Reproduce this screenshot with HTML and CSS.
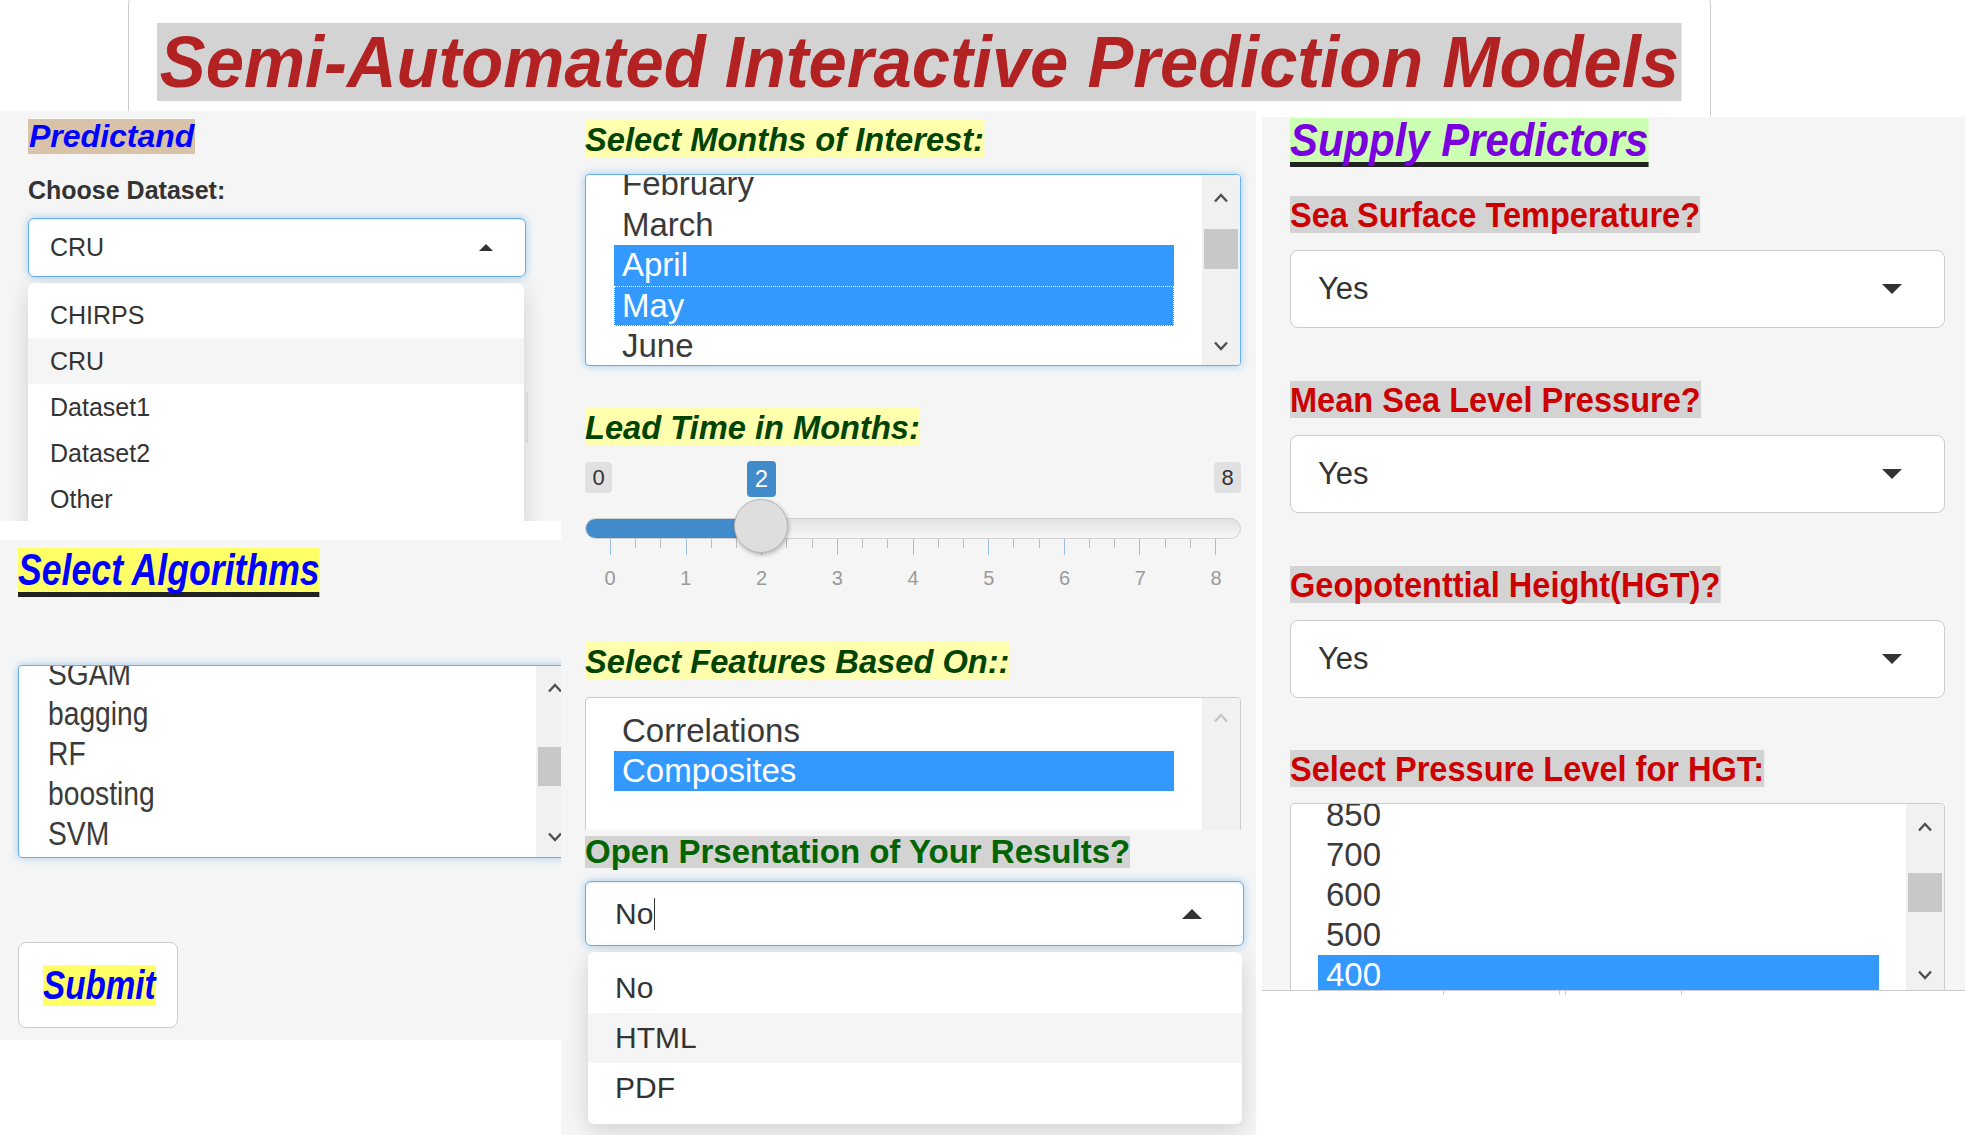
FILE: index.html
```html
<!DOCTYPE html>
<html lang="en">
<head>
<meta charset="utf-8">
<title>Semi-Automated Interactive Prediction Models</title>
<link rel="stylesheet" href="styles.css">
</head>
<body>
<header class="title-panel">
  <h1 class="title"><span class="title-text">Semi-Automated Interactive Prediction Models</span></h1>
</header>
<main class="cols">
  <div class="col-left">
    <section class="well well-predictand">
      <div class="hd"><span class="tag tag-predictand">Predictand</span></div>
      <label class="ctl-label">Choose Dataset:</label>
      <div class="sel sel-focus sel-dataset"><span>CRU</span><i class="caret caret-up caret-sm"></i></div>
      <div class="menu-wrap">
        <ul class="menu menu-dataset">
          <li>CHIRPS</li>
          <li class="hover">CRU</li>
          <li>Dataset1</li>
          <li>Dataset2</li>
          <li>Other</li>
        </ul>
        <span class="under-edge"></span>
      </div>
    </section>
    <section class="well well-algo">
      <div class="hd"><span class="tag tag-algo">Select Algorithms</span></div>
      <div class="lb focus lb-algo">
        <ul class="opts">
          <li><span>SGAM</span></li>
          <li><span>bagging</span></li>
          <li><span>RF</span></li>
          <li><span>boosting</span></li>
          <li><span>SVM</span></li>
        </ul>
        <div class="sbar">
          <div class="arr arr-top"><svg width="16" height="10" viewBox="0 0 16 10"><polyline points="2,8.5 8,2 14,8.5" fill="none" stroke="#505050" stroke-width="2.4"/></svg></div>
          <div class="thumb"></div>
          <div class="grow"></div>
          <div class="arr arr-bot"><svg width="16" height="10" viewBox="0 0 16 10"><polyline points="2,1.5 8,8 14,1.5" fill="none" stroke="#505050" stroke-width="2.4"/></svg></div>
        </div>
      </div>
      <div class="btn"><span class="tag tag-submit">Submit</span></div>
    </section>
  </div>

  <section class="col-mid">
    <div class="hd"><span class="tag tag-mid">Select Months of Interest:</span></div>
    <div class="lb focus lb-months">
      <ul class="opts">
        <li>February</li>
        <li>March</li>
        <li class="on">April</li>
        <li class="on dotted">May</li>
        <li>June</li>
      </ul>
      <div class="sbar">
        <div class="arr arr-top"><svg width="16" height="10" viewBox="0 0 16 10"><polyline points="2,8.5 8,2 14,8.5" fill="none" stroke="#505050" stroke-width="2.4"/></svg></div>
        <div class="thumb"></div>
        <div class="grow"></div>
        <div class="arr arr-bot"><svg width="16" height="10" viewBox="0 0 16 10"><polyline points="2,1.5 8,8 14,1.5" fill="none" stroke="#505050" stroke-width="2.4"/></svg></div>
      </div>
    </div>

    <div class="hd hd-lead"><span class="tag tag-mid">Lead Time in Months:</span></div>
    <div class="slider">
      <div class="badges"><span class="badge">0</span><span class="badge">8</span></div>
      <div class="track"><div class="bar" style="width: 176px"></div></div>
      <span class="badge badge-value">2</span>
      <span class="handle"></span>
      <div class="grid">
        <div class="seg"><i></i><i></i><i></i></div>
        <div class="seg"><i></i><i></i><i></i></div>
        <div class="seg"><i></i><i></i><i></i></div>
        <div class="seg"><i></i><i></i><i></i></div>
        <div class="seg"><i></i><i></i><i></i></div>
        <div class="seg"><i></i><i></i><i></i></div>
        <div class="seg"><i></i><i></i><i></i></div>
        <div class="seg"><i></i><i></i><i></i></div>
        <b class="end"></b>
      </div>
      <div class="grid-labels"><span>0</span><span>1</span><span>2</span><span>3</span><span>4</span><span>5</span><span>6</span><span>7</span><span>8</span></div>
    </div>

    <div class="hd hd-feat"><span class="tag tag-mid">Select Features Based On::</span></div>
    <div class="cut">
      <div class="lb lb-feat">
        <ul class="opts">
          <li>Correlations</li>
          <li class="on">Composites</li>
        </ul>
        <div class="sbar">
          <div class="arr arr-feat"><svg width="16" height="10" viewBox="0 0 16 10"><polyline points="2,8.5 8,2 14,8.5" fill="none" stroke="#c4c4c4" stroke-width="2.4"/></svg></div>
        </div>
      </div>
    </div>

    <div class="hd hd-open"><span class="tag tag-open">Open Prsentation of Your Results?</span></div>
    <div class="sel sel-focus sel-open"><span class="typed">No<b class="cursor"></b></span><i class="caret caret-up"></i></div>
    <ul class="menu menu-open">
      <li>No</li>
      <li class="hover">HTML</li>
      <li>PDF</li>
    </ul>
  </section>

  <div class="col-right">
    <section class="well well-pred">
      <div class="hd"><span class="tag tag-supply">Supply Predictors</span></div>

      <div class="hd hd-red hd-first"><span class="tag tag-red">Sea Surface Temperature?</span></div>
      <div class="sel sel-yes"><span>Yes</span><i class="caret caret-down"></i></div>

      <div class="hd hd-red"><span class="tag tag-red">Mean Sea Level Pressure?</span></div>
      <div class="sel sel-yes"><span>Yes</span><i class="caret caret-down"></i></div>

      <div class="hd hd-red"><span class="tag tag-red">Geopotenttial Height(HGT)?</span></div>
      <div class="sel sel-yes"><span>Yes</span><i class="caret caret-down"></i></div>

      <div class="hd hd-red hd-last"><span class="tag tag-red">Select Pressure Level for HGT:</span></div>
      <div class="lb lb-press">
        <ul class="opts">
          <li>850</li>
          <li>700</li>
          <li>600</li>
          <li>500</li>
          <li class="on">400</li>
        </ul>
        <div class="sbar">
          <div class="arr arr-top"><svg width="16" height="10" viewBox="0 0 16 10"><polyline points="2,8.5 8,2 14,8.5" fill="none" stroke="#505050" stroke-width="2.4"/></svg></div>
          <div class="thumb"></div>
          <div class="grow"></div>
          <div class="arr arr-bot"><svg width="16" height="10" viewBox="0 0 16 10"><polyline points="2,1.5 8,8 14,1.5" fill="none" stroke="#505050" stroke-width="2.4"/></svg></div>
        </div>
      </div>
    </section>
    <div class="tabline"><span class="tab"></span><span class="tab"></span></div>
  </div>
</main>
</body>
</html>
```

FILE: styles.css
```css
* { box-sizing: border-box; }
html, body { margin: 0; padding: 0; }
body {
  width: 1965px;
  height: 1135px;
  overflow: hidden;
  background: #fff;
  font-family: "Liberation Sans", Arial, sans-serif;
  color: #333;
}

/* ---------- title ---------- */
.title-panel {
  margin: -6px 0 0 128px;
  width: 1583px;
  height: 123px;
  border: 1px solid #ccc;
  border-bottom-color: transparent;
  border-radius: 10px 10px 0 0;
  background: #fff;
  padding: 28px 0 0 28px;
}
.title {
  margin: 0;
  display: flex;
  font-size: 72px;
  line-height: 78px;
  font-weight: bold;
  font-style: italic;
}
.title-text {
  flex: none;
  background: #d3d3d3;
  color: #b22222;
  padding: 0 3px;
  white-space: nowrap;
  transform: scaleX(.954);
  transform-origin: 0 0;
}

/* ---------- columns ---------- */
.cols { display: flex; align-items: flex-start; margin-top: -6px; }
.col-left { width: 561px; flex: none; }
.col-mid {
  width: 695px;
  flex: none;
  height: 1024px;
  background: #f5f5f5;
  padding: 9px 0 0 24px;
}
.col-right { width: 703px; flex: none; margin: 6px 0 0 6px; }

.well { background: #f5f5f5; overflow: hidden; }
.well-predictand { height: 410px; padding: 8px 0 0 28px; }
.well-algo { height: 500px; margin-top: 19px; padding: 8px 0 0 18px; }
.well-pred { height: 873px; padding: 1px 0 0 28px; }

/* ---------- heading tags ---------- */
.hd { display: flex; }
.tag {
  flex: none;
  font-weight: bold;
  font-style: italic;
  white-space: nowrap;
  transform-origin: 0 0;
}
.tag-predictand {
  font-size: 32px;
  line-height: 35px;
  color: #0000ff;
  background: #d8c3a9;
  padding: 0 1px;
}
.tag-algo {
  font-size: 44px;
  line-height: 44px;
  color: #0000ff;
  background: #ffff66;
  border-bottom: 5px solid #222;
  transform: scaleX(.81);
}
.tag-submit {
  font-size: 40px;
  line-height: 41px;
  color: #0000ff;
  background: #ffff66;
  transform: scaleX(.83);
}
.tag-mid {
  font-size: 34px;
  line-height: 38px;
  color: #004400;
  background: #ffffad;
  transform: scaleX(.96);
}
.tag-open {
  font-size: 33px;
  line-height: 32px;
  font-style: normal;
  color: #006400;
  background: #d3d3d3;
}
.tag-supply {
  font-size: 46px;
  line-height: 44px;
  color: #7a00e0;
  background: #ccffb3;
  border-bottom: 5px solid #222;
  transform: scaleX(.91);
}
.tag-red {
  font-size: 35px;
  line-height: 37px;
  font-style: normal;
  color: #cc0000;
  background: #d3d3d3;
  transform: scaleX(.93);
}

.ctl-label {
  display: block;
  margin-top: 21px;
  font-size: 25px;
  line-height: 30px;
  font-weight: bold;
  color: #333;
}

/* ---------- selects ---------- */
.sel {
  display: flex;
  align-items: center;
  justify-content: space-between;
  background: #fff;
  border: 1px solid #ccc;
  border-radius: 6px;
  color: #333;
}
.sel-focus {
  border-color: #66afe9;
  box-shadow: inset 0 1px 1px rgba(0,0,0,.075), 0 0 8px rgba(102,175,233,.6);
}
.sel-dataset {
  margin-top: 13px;
  width: 498px;
  height: 59px;
  font-size: 25px;
  padding-left: 21px;
}
.sel-dataset .caret { margin-right: 32px; }
.sel-open {
  margin-top: 13px;
  width: 659px;
  height: 65px;
  font-size: 30px;
  padding-left: 29px;
}
.sel-open .caret { margin-right: 41px; }
.sel-yes {
  margin-top: 17px;
  width: 655px;
  height: 78px;
  font-size: 31px;
  padding-left: 27px;
  border-radius: 8px;
}
.sel-yes .caret { margin-right: 42px; }

.caret { display: block; width: 0; height: 0; }
.caret-up {
  border-left: 10px solid transparent;
  border-right: 10px solid transparent;
  border-bottom: 10px solid #333;
}
.caret-up.caret-sm {
  border-left-width: 7px;
  border-right-width: 7px;
  border-bottom-width: 7px;
}
.caret-down {
  border-left: 10px solid transparent;
  border-right: 10px solid transparent;
  border-top: 10px solid #333;
}

.typed { display: flex; align-items: center; }
.cursor {
  display: block;
  width: 1px;
  height: 32px;
  margin-left: 1px;
  background: #333;
}

/* ---------- dropdown menus ---------- */
.menu-wrap { display: flex; align-items: flex-start; }
.under-edge {
  flex: none;
  width: 3px;
  height: 51px;
  margin: 115px 0 0 1px;
  background: #d9d9d9;
}
.menu {
  list-style: none;
  margin: 6px 0 0;
  padding: 9px 0;
  background: #fff;
  border-radius: 6px;
  box-shadow: 0 6px 22px rgba(0,0,0,.15);
  color: #333;
}
.menu li.hover { background: #f5f5f5; }
.menu-dataset { width: 496px; flex: none; font-size: 25px; }
.menu-dataset li { height: 46px; line-height: 46px; padding-left: 22px; }
.menu-open { width: 654px; margin-left: 3px; padding: 11px 0; font-size: 30px; }
.menu-open li { height: 50px; line-height: 50px; padding-left: 27px; }

/* ---------- list boxes ---------- */
.lb {
  display: flex;
  background: #fff;
  border: 1px solid #ccc;
  border-radius: 4px;
  overflow: hidden;
  color: #3a3a3a;
}
.lb.focus {
  border-color: #66afe9;
  box-shadow: 0 0 8px rgba(102,175,233,.6);
}
.opts {
  flex: 1;
  list-style: none;
  margin: 0;
  padding: 0 28px;
  font-size: 33px;
  line-height: 40px;
}
.opts li { height: 40px; padding-left: 8px; white-space: nowrap; }
.opts li.on { background: #3399ff; color: #fff; }
.opts li.dotted { outline: 1px dotted #fff; outline-offset: -1px; }

.sbar {
  width: 38px;
  flex: none;
  background: #f1f1f1;
  display: flex;
  flex-direction: column;
}
.arr { display: flex; align-items: center; justify-content: center; flex: none; }
.thumb { flex: none; margin: 0 2px; background: #c8c8c8; }
.grow { flex: 1; }

.lb-months { margin-top: 16px; width: 656px; height: 192px; }
.lb-months .opts { margin-top: -11px; }
.lb-months .opts li { height: 40.5px; }
.lb-months .arr-top { height: 46px; }
.lb-months .thumb { margin-top: 8px; height: 40px; }
.lb-months .arr-bot { height: 38px; }

.lb-algo { margin-top: 68px; width: 557px; height: 193px; }
.lb-algo .opts { margin-top: -13px; padding: 0 20px 0 21px; }
.lb-algo .opts li span {
  display: block;
  font-size: 34px;
  line-height: 40px;
  transform: scaleX(.83);
  transform-origin: 0 50%;
}
.lb-algo .arr-top { height: 44px; }
.lb-algo .thumb { margin-top: 37px; height: 39px; }
.lb-algo .arr-bot { height: 40px; }

.cut { margin-top: 17px; height: 133px; overflow: hidden; }
.lb-feat { width: 656px; height: 200px; }
.lb-feat .opts { padding-top: 13px; }
.lb-feat .arr-feat { height: 40px; }

.lb-press { margin-top: 16px; width: 655px; height: 193px; }
.lb-press .opts { margin-top: -9px; padding: 0 27px; }
.lb-press .arr-top { height: 46px; }
.lb-press .thumb { margin-top: 23px; height: 39px; }
.lb-press .arr-bot { height: 40px; }

/* ---------- submit button ---------- */
.btn {
  margin-top: 84px;
  width: 160px;
  height: 86px;
  display: flex;
  align-items: flex-start;
  background: #fff;
  border: 1px solid #ccc;
  border-radius: 8px;
  padding: 22px 0 0 24px;
}

/* ---------- headings spacing ---------- */
.hd-lead { margin-top: 42px; }
.hd-feat { margin-top: 52px; }
.hd-open { margin-top: 6px; }
.hd-red { margin-top: 53px; }
.hd-red.hd-first { margin-top: 29px; }
.hd-red.hd-last { margin-top: 52px; }

/* ---------- slider ---------- */
.slider { position: relative; margin-top: 15px; width: 656px; }
.badges { display: flex; justify-content: space-between; padding-top: 1px; height: 32px; }
.badge {
  display: block;
  width: 27px;
  height: 31px;
  line-height: 31px;
  text-align: center;
  font-size: 22px;
  color: #333;
  background: #e1e1e1;
  border-radius: 4px;
}
.badge-value {
  position: absolute;
  left: 162px;
  top: 0;
  width: 29px;
  height: 36px;
  line-height: 36px;
  font-size: 24px;
  color: #fff;
  background: #428bca;
}
.track {
  margin-top: 25px;
  height: 21px;
  display: flex;
  border: 1px solid #d0d0d0;
  border-radius: 11px;
  background: linear-gradient(#e2e2e2, #f6f6f6);
  overflow: hidden;
}
.bar { background: #428bca; flex: none; }
.handle {
  position: absolute;
  left: 149px;
  top: 38px;
  width: 54px;
  height: 54px;
  border-radius: 50%;
  background: #dedede;
  border: 1px solid #b5b5b5;
  box-shadow: 1px 2px 4px rgba(0,0,0,.25);
}
.grid { display: flex; margin: 0 25px; height: 16px; }
.seg { flex: 1; display: flex; }
.seg i { flex: 1; height: 9px; border-left: 1px solid #bdbdbd; }
.seg i:first-child { height: 16px; border-left-color: #9dc0e2; }
.grid .end { flex: none; width: 0; height: 16px; border-left: 1px solid #9dc0e2; }
.grid-labels {
  display: grid;
  grid-template-columns: repeat(9, 1fr);
  margin: 11px -12.875px 0;
  font-size: 20px;
  line-height: 24px;
  color: #9a9a9a;
  text-align: center;
}

/* ---------- bottom line under right panel ---------- */
.tabline {
  display: flex;
  border-top: 1px solid #ccc;
  padding-left: 181px;
  gap: 5px;
}
.tab {
  width: 117px;
  height: 4px;
  border-left: 1px solid #ccc;
  border-right: 1px solid #ccc;
}
```
